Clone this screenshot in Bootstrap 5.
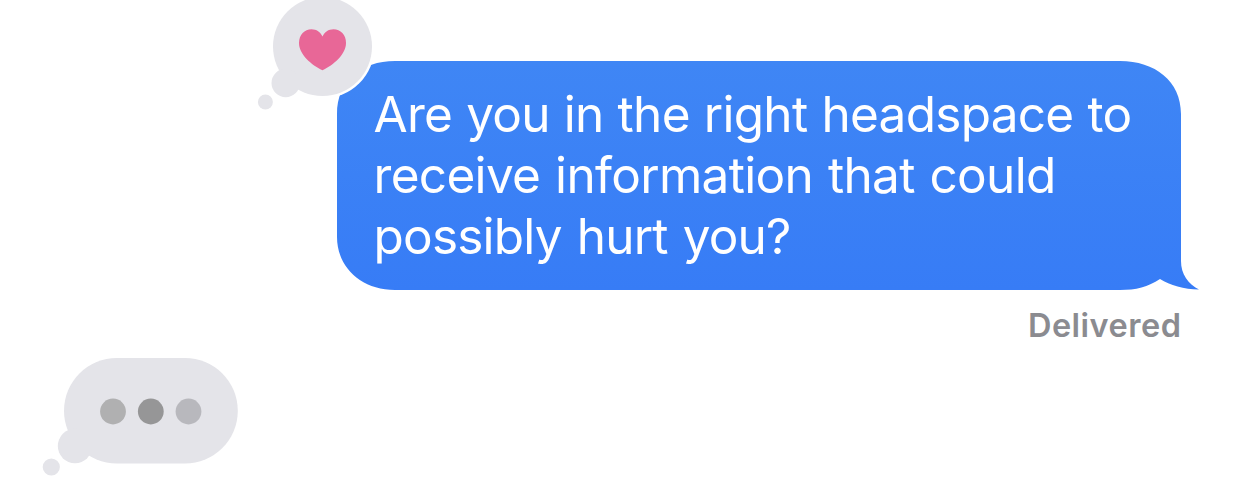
<!DOCTYPE html>
<html lang="en">
<head>
<meta charset="utf-8">
<meta name="viewport" content="width=device-width, initial-scale=1">
<title>Messages</title>
<link href="https://cdn.jsdelivr.net/npm/bootstrap@5.3.0/dist/css/bootstrap.min.css" rel="stylesheet">
<style>
body { font-family: Inter, "Liberation Sans", sans-serif; background: #fff; }
.thread { height: 478px; padding-top: 61px; }
.bubble { width: 844px; height: 229px; margin-right: 61px; padding: 22.5px 0 0 36.5px; color: #fff; font-size: 49.5px; line-height: 61px; }
.bubble-shape { top: 0; left: 0; }
.line-a { letter-spacing: -.72px; word-spacing: .8px; }
.line-b { letter-spacing: -.68px; word-spacing: 1.6px; }
.line-c { letter-spacing: -.8px; word-spacing: 1.9px; }
.tapback { left: -87px; top: -61px; }
.status { margin: 14px 61px 0 0; font-size: 32.5px; line-height: 44px; font-weight: 600; letter-spacing: .5px; color: #8b8b90; }
.status-text { margin-right: -.5px; }
.typing { margin: 6px 0 0 36px; }
</style>
</head>
<body>
<main class="thread d-flex flex-column overflow-hidden">
  <div class="bubble position-relative align-self-end flex-shrink-0">
    <svg class="bubble-shape position-absolute overflow-visible" width="862" height="229" viewBox="0 0 862 229" aria-hidden="true">
      <defs><linearGradient id="blue" x1="0" y1="0" x2="0" y2="1"><stop offset="0" stop-color="#3f86f5"/><stop offset="1" stop-color="#377cf6"/></linearGradient></defs>
      <path fill="url(#blue)" d="M58 0H783C818 0 844 20 844 53V200C844 213 851 223 862 228.500C847 228.500 833 224 823 218C811 226 799 229 783 229H58C24 229 0 206 0 176V53C0 20 24 0 58 0Z"/>
    </svg>
    <div class="position-relative text-nowrap">
      <span class="d-block"><span class="line-a">Are you in the right headspace to</span></span>
      <span class="d-block"><span class="line-b">receive information that could</span></span>
      <span class="d-block"><span class="line-c">possibly hurt you?</span></span>
    </div>
    <svg class="tapback position-absolute" width="130" height="120" viewBox="250 0 130 120" role="img" aria-label="Loved">
      <circle cx="322.500" cy="46.500" r="52" fill="#fff"/>
      <g fill="#e4e4e9"><circle cx="322.500" cy="46.500" r="49.500"/><circle cx="285.700" cy="83" r="14.200"/><circle cx="265.400" cy="102" r="7.500"/></g>
      <path fill="#e86797" d="M322.500 70.300C311.500 65 299 54.500 299 43C299 34.500 304.500 29.200 311.500 29.200C316.500 29.200 320.500 32 322.500 36.500C324.500 32 328.500 29.200 333.500 29.200C340.500 29.200 346 34.500 346 43C346 54.500 333.500 65 322.500 70.300Z"/>
    </svg>
  </div>
  <div class="status align-self-end flex-shrink-0"><span class="status-text">Delivered</span></div>
  <svg class="typing flex-shrink-0" width="210" height="124" viewBox="36 354 210 124" role="img" aria-label="Typing">
    <g fill="#e4e4e9"><rect x="64" y="358" width="173.800" height="105.500" rx="52.750"/><circle cx="75" cy="446" r="17.200"/><circle cx="51.300" cy="467" r="8.600"/></g>
    <circle cx="113" cy="411.500" r="12.900" fill="#b0b0b1"/>
    <circle cx="150.800" cy="411.500" r="12.900" fill="#969697"/>
    <circle cx="188.500" cy="411.500" r="12.900" fill="#b8b8bd"/>
  </svg>
</main>
<script src="https://cdn.jsdelivr.net/npm/bootstrap@5.3.0/dist/js/bootstrap.bundle.min.js"></script>
</body>
</html>
